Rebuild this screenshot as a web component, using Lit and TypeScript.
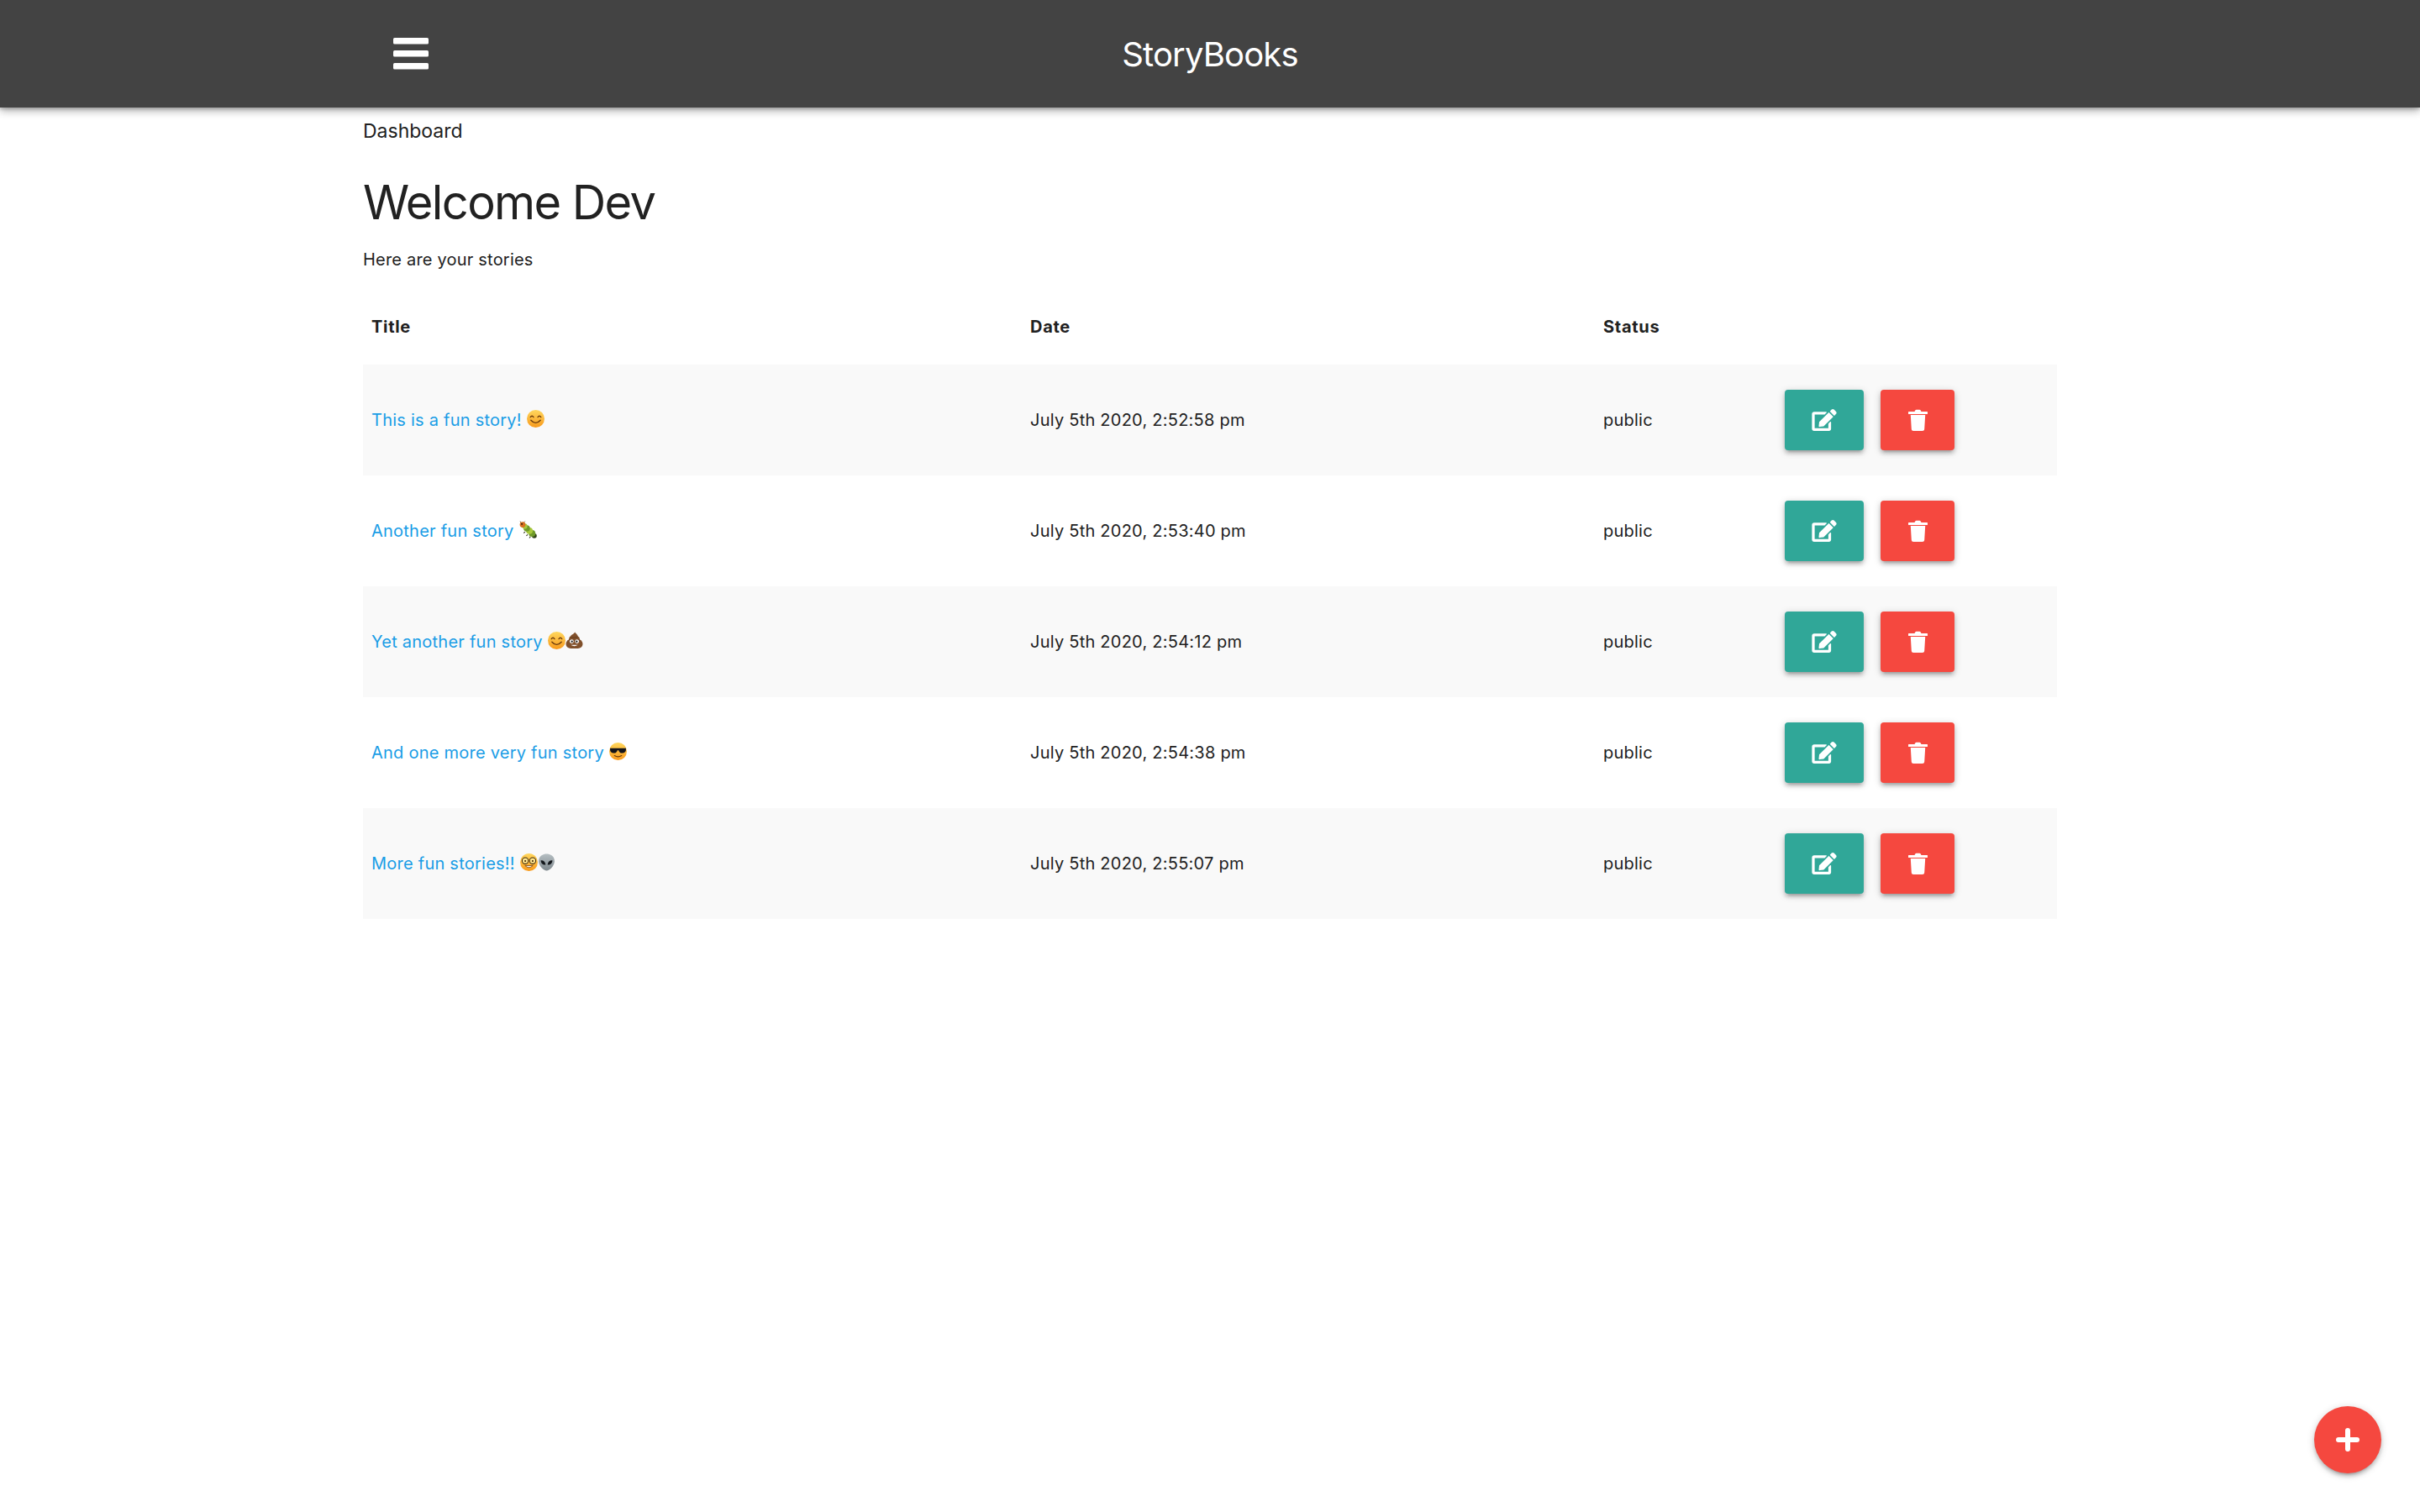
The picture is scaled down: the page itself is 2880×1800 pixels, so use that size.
import { LitElement, html, svg, css } from 'lit';
import { customElement } from 'lit/decorators.js';

const face = (id: string, a: string, b: string) => svg`
  <defs><linearGradient id=${id} x1="0" y1="0" x2="0" y2="1"><stop offset="0" stop-color=${a}/><stop offset="1" stop-color=${b}/></linearGradient></defs>
  <circle cx="10" cy="10" r="10" fill="url(#${id})"/>`;

const emoji: Record<string, unknown> = {
  smile: svg`${face('s', '#ffd75e', '#f89a1c')}
    <path d="M4 8.2q1.8-2.6 3.6 0M12.4 8.2q1.8-2.6 3.6 0" fill="none" stroke="#6b3a0c" stroke-width="1.2" stroke-linecap="round"/>
    <path d="M4.6 11.6q5.4 6 10.8 0" fill="none" stroke="#6b3a0c" stroke-width="1.3" stroke-linecap="round"/>`,
  bug: svg`
    <path d="M2 2.5L1 .5M5 2l1.500-1.500" stroke="#6b5a30" stroke-width=".8"/>
    <circle cx="17" cy="17" r="2.800" fill="#33461c"/>
    <circle cx="14.500" cy="14.200" r="3.800" fill="#6f9a28"/>
    <circle cx="11.500" cy="11.300" r="3.800" fill="#a8c83c"/>
    <circle cx="8.500" cy="8.600" r="3.600" fill="#6f9a28"/>
    <circle cx="6.200" cy="6.200" r="3" fill="#a8c83c"/>
    <circle cx="3.800" cy="4.300" r="3.200" fill="#d9701e"/>
    <circle cx="2.900" cy="3.600" r="1.100" fill="#4a2a10"/>
    <path d="M6.500 12.500l-1.500 1.500M9.500 15.500l-1.500 1.500M12.500 18l-1 1.500" stroke="#2e2e1a" stroke-width="1"/>`,
  poop: svg`
    <path d="M10.800.5c.6 1.800 3.200 2.500 3.200 4.800 1.500.6 2.300 2 2 3.600 2 .8 3.500 2.700 3.500 5 0 3.400-2.500 5.100-5.500 5.100H6C3 19 .5 17.300.5 13.900c0-2.300 1.500-4.200 3.500-5-.3-1.600.5-3 2-3.600C5.700 3.500 9.500 3 10.800.500z" fill="#80502b"/>
    <path d="M5 5.800q5 2.200 9 0M3.800 9q6 2.400 12.400 0" fill="none" stroke="#5c3618" stroke-width=".7"/>
    <circle cx="7" cy="11" r="2.300" fill="#fff"/><circle cx="13" cy="11" r="2.300" fill="#fff"/>
    <circle cx="7.300" cy="11.200" r="1.100" fill="#222"/><circle cx="12.700" cy="11.200" r="1.100" fill="#222"/>
    <path d="M6 15q4 2.800 8 0z" fill="#fff"/>`,
  cool: svg`${face('c', '#ffd75e', '#f89a1c')}
    <path d="M1 6.400h18v1.800c0 2.800-2.200 3.800-4.300 3.800-2.400 0-3.700-1.800-4-3.300h-1.400c-.3 1.500-1.600 3.300-4 3.300C3.200 12 1 11 1 8.200z" fill="#15151a"/>
    <path d="M6 14.800q4 2.600 8 0" fill="none" stroke="#6b3a0c" stroke-width="1.200" stroke-linecap="round"/>`,
  nerd: svg`${face('n', '#ffd75e', '#f89a1c')}
    <circle cx="5.800" cy="8.300" r="3.500" fill="#ffe48a" stroke="#3f2a0e" stroke-width="1"/>
    <circle cx="14.200" cy="8.300" r="3.500" fill="#ffe48a" stroke="#3f2a0e" stroke-width="1"/>
    <circle cx="5.800" cy="8.600" r="1" fill="#3b2108"/><circle cx="14.200" cy="8.600" r="1" fill="#3b2108"/>
    <path d="M5.500 13.800q4.500 4.200 9 0z" fill="#fff" stroke="#6b3a0c" stroke-width=".7"/>`,
  alien: svg`
    <defs><linearGradient id="al" x1="0" y1="0" x2="0" y2="1"><stop offset="0" stop-color="#b6bfc3"/><stop offset="1" stop-color="#7f898e"/></linearGradient></defs>
    <path d="M10 .5c5.400 0 9 3.500 9 8.200 0 5-5.800 10.800-9 10.800S1 13.700 1 8.700C1 4 4.600.5 10 .5z" fill="url(#al)"/>
    <path d="M3.400 8c2.600-.4 5.200 1.500 5.500 4.800-2.800.6-5.300-1.600-5.500-4.800zM16.600 8c-2.600-.4-5.200 1.500-5.500 4.800 2.800.6 5.300-1.600 5.500-4.800z" fill="#14181c"/>`,
};

const stories = [
  { title: 'This is a fun story!', icons: ['smile'], date: 'July 5th 2020, 2:52:58 pm' },
  { title: 'Another fun story', icons: ['bug'], date: 'July 5th 2020, 2:53:40 pm' },
  { title: 'Yet another fun story', icons: ['smile', 'poop'], date: 'July 5th 2020, 2:54:12 pm' },
  { title: 'And one more very fun story', icons: ['cool'], date: 'July 5th 2020, 2:54:38 pm' },
  { title: 'More fun stories!!', icons: ['nerd', 'alien'], date: 'July 5th 2020, 2:55:07 pm' },
];

@customElement('app-root')
export class AppRoot extends LitElement {
  static styles = css`
    :host {
      display: block;
      min-height: 1800px;
      background: #fff;
      color: #212121;
      font-family: Inter, 'Liberation Sans', sans-serif;
    }
    .nav {
      height: 128px;
      background: #434343;
      box-shadow: 0 4px 10px 0 rgba(0, 0, 0, 0.3), 0 2px 4px 0 rgba(0, 0, 0, 0.2);
      position: relative;
    }
    .nav-inner {
      width: 2016px;
      height: 100%;
      margin: 0 auto;
      display: grid;
      grid-template-columns: 1fr auto 1fr;
      align-items: center;
    }
    .bars {
      display: block;
      width: 42px;
      height: 38px;
      margin-left: 36px;
    }
    .brand {
      color: #fff;
      font-size: 40px;
      font-weight: 400;
      letter-spacing: -0.85px;
    }
    .container {
      width: 2016px;
      margin: 0 auto;
    }
    .crumb {
      font-size: 23px;
      line-height: 30px;
      margin-top: 13px;
    }
    h3 {
      font-size: 56px;
      line-height: 70px;
      font-weight: 400;
      margin: 35px 0 0;
      letter-spacing: -1.6px;
    }
    .lead {
      font-size: 20px;
      line-height: 28px;
      margin: 19px 0 0;
      letter-spacing: 0.2px;
    }
    table {
      width: 2016px;
      table-layout: fixed;
      border-collapse: collapse;
      margin-top: 20px;
      font-size: 20px;
      letter-spacing: 0.24px;
    }
    th {
      height: 91px;
      padding: 0 10px;
      text-align: left;
      font-weight: 700;
      letter-spacing: 0.7px;
    }
    td {
      height: 132px;
      padding: 0 10px;
    }
    tbody tr:nth-child(odd) {
      background: #f9f9f9;
    }
    a {
      color: #1a9de6;
      text-decoration: none;
    }
    .emoji {
      width: 21px;
      height: 21px;
      vertical-align: -2px;
    }
    .emoji.first {
      margin-left: 6px;
    }
    .actions {
      display: flex;
      gap: 20px;
    }
    .btn {
      height: 72px;
      border: 0;
      border-radius: 4px;
      padding: 0;
      display: flex;
      align-items: center;
      justify-content: center;
      color: #fff;
      box-shadow: 0 4px 4px 0 rgba(0, 0, 0, 0.14), 0 6px 2px -4px rgba(0, 0, 0, 0.12), 0 2px 10px 0 rgba(0, 0, 0, 0.2);
    }
    .btn svg {
      display: block;
      fill: currentColor;
    }
    .edit {
      width: 94px;
      background: #30a798;
    }
    .edit svg {
      width: 30px;
      height: 26px;
    }
    .del {
      width: 88px;
      background: #f5483f;
    }
    .del svg {
      width: 23px;
      height: 26px;
    }
    .fab {
      position: fixed;
      right: 46px;
      bottom: 46px;
      width: 80px;
      height: 80px;
      border-radius: 50%;
      background: #f5483f;
      display: flex;
      align-items: center;
      justify-content: center;
      box-shadow: 0 4px 4px 0 rgba(0, 0, 0, 0.14), 0 6px 2px -4px rgba(0, 0, 0, 0.12), 0 2px 10px 0 rgba(0, 0, 0, 0.2);
    }
    .fab svg {
      width: 28px;
      height: 28px;
    }
  `;

  render() {
    return html`
      <div class="nav">
        <div class="nav-inner">
          <svg class="bars" viewBox="0 0 42 38" fill="#fff">
            <rect x="0" y="0" width="42" height="7.5" rx="1.6"/>
            <rect x="0" y="15" width="42" height="7.5" rx="1.6"/>
            <rect x="0" y="30" width="42" height="7.5" rx="1.6"/>
          </svg>
          <div class="brand">StoryBooks</div>
          <div></div>
        </div>
      </div>
      <div class="container">
        <div class="crumb">Dashboard</div>
        <h3>Welcome Dev</h3>
        <p class="lead">Here are your stories</p>
        <table>
          <colgroup>
            <col style="width: 784px" />
            <col style="width: 682px" />
            <col style="width: 216px" />
            <col style="width: 334px" />
          </colgroup>
          <thead>
            <tr><th>Title</th><th>Date</th><th>Status</th><th></th></tr>
          </thead>
          <tbody>
            ${stories.map(
              (s) => html`
                <tr>
                  <td>
                    <a href="#">${s.title}</a>${s.icons.map(
                      (name, i) => html`<svg class="emoji ${i === 0 ? 'first' : ''}" viewBox="0 0 20 20">${emoji[name]}</svg>`
                    )}
                  </td>
                  <td>${s.date}</td>
                  <td>public</td>
                  <td>
                    <div class="actions">
                      <button class="btn edit">
                        <svg viewBox="0 0 576 512"><path d="M402.6 83.2l90.2 90.2c3.8 3.8 3.8 10 0 13.8L274.4 405.6l-92.8 10.3c-12.4 1.4-22.9-9.1-21.5-21.5l10.3-92.8L388.8 83.2c3.8-3.8 10-3.8 13.8 0zm162-22.9l-48.8-48.8c-15.2-15.2-39.9-15.2-55.2 0l-35.4 35.4c-3.8 3.8-3.8 10 0 13.8l90.2 90.2c3.8 3.8 10 3.8 13.8 0l35.4-35.4c15.2-15.3 15.2-40 0-55.2zM384 346.2V448H64V128h229.8c3.2 0 6.2-1.3 8.5-3.5l40-40c7.6-7.6 2.2-20.5-8.5-20.5H48C21.5 64 0 85.5 0 112v352c0 26.5 21.5 48 48 48h352c26.5 0 48-21.5 48-48V306.2c0-10.7-12.9-16-20.5-8.5l-40 40c-2.2 2.3-3.5 5.3-3.5 8.5z"/></svg>
                      </button>
                      <button class="btn del">
                        <svg viewBox="0 0 23 26"><path d="M1 3h6.500l.8-1.500C8.600 1 9 .7 9.700.7h3.600c.7 0 1.100.3 1.400.8L15.500 3H22a1 1 0 0 1 0 3H1A1 1 0 0 1 1 3zM2.800 7h17.400l-1 16.700c-.1 1.300-1 2.300-2.400 2.300H6.200c-1.400 0-2.300-1-2.400-2.300z"/></svg>
                      </button>
                    </div>
                  </td>
                </tr>
              `
            )}
          </tbody>
        </table>
      </div>
      <div class="fab">
        <svg viewBox="0 0 28 28"><path d="M3 14h22M14 3v22" stroke="#fff" stroke-width="6" stroke-linecap="round" fill="none"/></svg>
      </div>
    `;
  }
}
